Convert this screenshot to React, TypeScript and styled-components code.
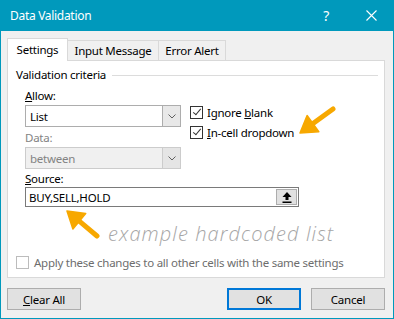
import React from "react";
import styled, { createGlobalStyle } from "styled-components";

const GlobalStyle = createGlobalStyle`
  body {
    margin: 0;
    font-family: "Noto Sans", "Segoe UI", sans-serif;
    font-size: 11.5px;
    letter-spacing: -0.25px;
    color: #000;
  }
`;

const ACCENT = "#0099bc";
const ARROW = "#f7a800";

export default function App() {
  return (
    <>
      <GlobalStyle />
      <Window>
        <TitleBar>
          <Title>Data Validation</Title>
          <Help>?</Help>
          <svg width="11" height="11" viewBox="0 0 11 11">
            <path d="M0.5 0.5 L10.5 10.5 M10.5 0.5 L0.5 10.5" stroke="#fff" strokeWidth="1.1" />
          </svg>
        </TitleBar>

        <Body>
          <Tabs>
            <Tab $active $w={61}>Settings</Tab>
            <Tab $w={92}>Input Message</Tab>
            <Tab $w={68}>Error Alert</Tab>
          </Tabs>

          <Panel>
            <GroupHeader>
              <span>Validation criteria</span>
              <GroupLine />
            </GroupHeader>

            <Criteria>
              <LeftColumn>
                <Label>
                  <U>A</U>llow:
                </Label>
                <Combo>
                  <ComboText>List</ComboText>
                  <ComboButton>
                    <Chevron />
                  </ComboButton>
                </Combo>
                <Label $disabled>Data:</Label>
                <Combo $disabled>
                  <ComboText>between</ComboText>
                  <ComboButton $disabled>
                    <Chevron />
                  </ComboButton>
                </Combo>
              </LeftColumn>

              <RightColumn>
                <CheckList>
                  <CheckRow>
                    <CheckBox $checked />
                    <span>
                      Ignore <U>b</U>lank
                    </span>
                  </CheckRow>
                  <CheckRow>
                    <CheckBox $checked />
                    <span>
                      <U>I</U>n-cell dropdown
                    </span>
                  </CheckRow>
                </CheckList>
                <CalloutArrow>
                  <svg width="40" height="32" viewBox="0 0 40 32">
                    <line x1="16" y1="18.6" x2="36" y2="4" stroke={ARROW} strokeWidth="5" strokeLinecap="round" />
                    <polygon points="3,28 21.8,26.7 10.1,10.5" fill={ARROW} stroke={ARROW} strokeWidth="1.5" strokeLinejoin="round" />
                  </svg>
                </CalloutArrow>
              </RightColumn>
            </Criteria>

            <SourceBlock>
              <Label>
                <U>S</U>ource:
              </Label>
              <SourceInput>
                <SourceText>BUY,SELL,HOLD</SourceText>
                <CollapseButton>
                  <svg width="10" height="11" viewBox="0 0 10 11">
                    <polygon points="5,0 0.5,5 9.5,5" fill="#000" />
                    <rect x="3.5" y="5" width="3" height="3" fill="#000" />
                    <rect x="0.5" y="9.5" width="9" height="1.5" fill="#000" />
                  </svg>
                </CollapseButton>
              </SourceInput>
            </SourceBlock>

            <Annotation>
              <svg width="36" height="32" viewBox="0 0 36 32">
                <line x1="15.3" y1="13.2" x2="33" y2="28" stroke={ARROW} strokeWidth="5" strokeLinecap="round" />
                <polygon points="3,3 21.7,5.5 8.9,20.9" fill={ARROW} stroke={ARROW} strokeWidth="1.5" strokeLinejoin="round" />
              </svg>
              <Note>example hardcoded list</Note>
            </Annotation>

            <ApplyRow>
              <CheckBox $disabled />
              <span>Apply these changes to all other cells with the same settings</span>
            </ApplyRow>
          </Panel>

          <Footer>
            <Button>
              <U>C</U>lear All
            </Button>
            <Spacer />
            <Button $primary>OK</Button>
            <Button>Cancel</Button>
          </Footer>
        </Body>
      </Window>
    </>
  );
}

const Chevron = () => (
  <svg width="8" height="5" viewBox="0 0 8 5">
    <path d="M0.5 0.5 L4 4 L7.5 0.5" stroke="#606060" strokeWidth="1" fill="none" />
  </svg>
);

const Window = styled.div`
  width: 394px;
  height: 319px;
  box-sizing: border-box;
  border: 1px solid ${ACCENT};
  border-top: none;
  background: #f0f0f0;
  display: flex;
  flex-direction: column;
`;

const TitleBar = styled.div`
  height: 31px;
  margin: 0 -1px;
  padding: 0 17px 0 10px;
  background: ${ACCENT};
  color: #fff;
  display: flex;
  align-items: center;
`;

const Title = styled.div`
  flex: 1;
  font-size: 12px;
  letter-spacing: -0.3px;
`;

const Help = styled.div`
  font-size: 14px;
  margin-right: 37px;
`;

const Body = styled.div`
  padding: 0 8px 0 6px;
  display: flex;
  flex-direction: column;
`;

const Tabs = styled.div`
  margin-top: 7px;
  height: 22px;
  display: flex;
  align-items: flex-end;
`;

const Tab = styled.div<{ $active?: boolean; $w: number }>`
  box-sizing: border-box;
  width: ${(p) => p.$w}px;
  height: ${(p) => (p.$active ? 23 : 21)}px;
  margin-bottom: -1px;
  margin-right: -1px;
  padding-bottom: ${(p) => (p.$active ? 2 : 0)}px;
  border: 1px solid #d9d9d9;
  border-bottom: ${(p) => (p.$active ? "none" : "1px solid #d9d9d9")};
  background: ${(p) => (p.$active ? "#fff" : "#f0f0f0")};
  display: flex;
  align-items: center;
  justify-content: center;
  position: relative;
  z-index: ${(p) => (p.$active ? 1 : 0)};
`;

const Panel = styled.div`
  box-sizing: border-box;
  height: 218px;
  border: 1px solid #d9d9d9;
  background: #fff;
  display: flex;
  flex-direction: column;
`;

const GroupHeader = styled.div`
  margin-top: 6px;
  padding: 0 6px 0 8px;
  height: 16px;
  line-height: 16px;
  display: flex;
  align-items: center;
  gap: 6px;
`;

const GroupLine = styled.div`
  flex: 1;
  height: 1px;
  background: #dcdcdc;
`;

const Criteria = styled.div`
  margin-top: 5px;
  padding-left: 17px;
  display: flex;
`;

const LeftColumn = styled.div`
  width: 156px;
  display: flex;
  flex-direction: column;
`;

const Label = styled.div<{ $disabled?: boolean }>`
  height: 16px;
  line-height: 16px;
  color: ${(p) => (p.$disabled ? "#838383" : "#000")};
`;

const U = styled.span`
  text-decoration: underline;
`;

const Combo = styled.div<{ $disabled?: boolean }>`
  box-sizing: border-box;
  height: 22px;
  margin: 1px 0 3px;
  border: 1px solid ${(p) => (p.$disabled ? "#cccccc" : "#adadad")};
  background: ${(p) => (p.$disabled ? "#f0f0f0" : "#fff")};
  color: ${(p) => (p.$disabled ? "#838383" : "#000")};
  display: flex;
  align-items: stretch;

  &:last-child {
    margin-bottom: 2px;
  }
`;

const ComboText = styled.div`
  flex: 1;
  padding-left: 4px;
  display: flex;
  align-items: center;
`;

const ComboButton = styled.div<{ $disabled?: boolean }>`
  width: 17px;
  border-left: 1px solid ${(p) => (p.$disabled ? "#cccccc" : "#adadad")};
  background: ${(p) => (p.$disabled ? "#e5e5e5" : "#e8e8e8")};
  display: flex;
  align-items: center;
  justify-content: center;
`;

const RightColumn = styled.div`
  margin-left: 9px;
  padding-top: 14px;
  display: flex;
  align-items: flex-start;
`;

const CheckList = styled.div`
  display: flex;
  flex-direction: column;
`;

const CheckRow = styled.div`
  height: 20px;
  display: flex;
  align-items: center;
  gap: 4px;
`;

const CheckBox = styled.div<{ $checked?: boolean; $disabled?: boolean }>`
  box-sizing: border-box;
  width: 13px;
  height: 13px;
  border: 1px solid ${(p) => (p.$disabled ? "#bcbcbc" : "#333")};
  background: #fff;
  position: relative;

  &::after {
    content: "";
    display: ${(p) => (p.$checked ? "block" : "none")};
    position: absolute;
    left: 3.5px;
    top: 0px;
    width: 3px;
    height: 7px;
    border: solid #333;
    border-width: 0 1px 1px 0;
    transform: rotate(40deg);
  }
`;

const CalloutArrow = styled.div`
  margin: 3px 0 0 3px;
  display: flex;
`;

const SourceBlock = styled.div`
  padding-left: 17px;
  display: flex;
  flex-direction: column;
`;

const SourceInput = styled.div`
  box-sizing: border-box;
  width: 274px;
  height: 20px;
  border: 1px solid #7a7a7a;
  display: flex;
  align-items: stretch;
`;

const SourceText = styled.div`
  flex: 1;
  padding-left: 3px;
  display: flex;
  align-items: center;
`;

const CollapseButton = styled.div`
  box-sizing: border-box;
  width: 21px;
  margin: 1px;
  border: 1px solid #adadad;
  background: #e1e1e1;
  display: flex;
  align-items: center;
  justify-content: center;
`;

const Annotation = styled.div`
  height: 47px;
  padding: 1px 0 0 56px;
  box-sizing: border-box;
  display: flex;
  align-items: flex-start;
`;

const Note = styled.div`
  margin: 14px 0 0 8px;
  font-family: "Open Sans", sans-serif;
  font-style: italic;
  font-weight: 300;
  font-size: 20px;
  line-height: 24px;
  letter-spacing: 1.1px;
  color: #a6a6a6;
`;

const ApplyRow = styled.div`
  padding-left: 8px;
  height: 16px;
  display: flex;
  align-items: center;
  gap: 5px;
  color: #6d6d6d;
`;

const Footer = styled.div`
  margin-top: 10px;
  display: flex;
  gap: 10px;
`;

const Spacer = styled.div`
  flex: 1;
`;

const Button = styled.div<{ $primary?: boolean }>`
  box-sizing: border-box;
  width: 74px;
  height: 22px;
  border: ${(p) => (p.$primary ? "2px solid #0078d7" : "1px solid #adadad")};
  background: #e1e1e1;
  display: flex;
  align-items: center;
  justify-content: center;
`;
